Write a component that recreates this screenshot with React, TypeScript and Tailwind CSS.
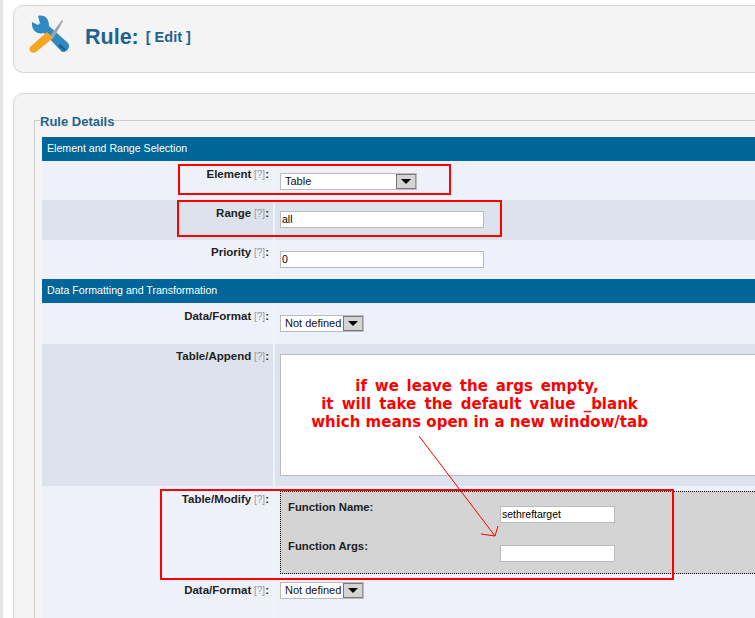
import React from "react";

const Help = () => <span className="text-[10px] font-normal text-[#999]"> [?]</span>;

const Label = ({ name, tall }: { name: string; tall?: boolean }) => (
  <div className={`w-[231px] shrink-0 pr-[4px] text-right text-[11.5px] font-bold text-[#222] ${tall ? "pt-[4px]" : "pt-[5px]"}`}>
    {name}
    <Help />:
  </div>
);

const Row = ({ name, alt, tall, h, children }: { name: string; alt?: boolean; tall?: boolean; h: string; children: React.ReactNode }) => (
  <div className={`flex ${h} ${alt ? "bg-[#dde3ed]" : "bg-[#eef1f9]"}`}>
    <Label name={name} tall={tall} />
    <div className={`w-[2px] shrink-0 ${alt ? "bg-[#eef1f9]" : "bg-[#f1f4fa]"}`} />
    <div className="min-w-0 flex-1 pl-[5px]">{children}</div>
  </div>
);

const SectionHead = ({ title }: { title: string }) => (
  <div className="flex h-6 items-center bg-[#006699] pl-[5px] text-[10.6px] text-white">{title}</div>
);

const Input = ({ value, w }: { value?: string; w: string }) => (
  <div className={`flex h-[17px] items-center border border-[#bbb] bg-white pl-px text-[10.5px] font-normal text-black ${w}`}>
    {value}
  </div>
);

const Select = ({ value, w }: { value: string; w: string }) => (
  <div className={`flex h-[17px] items-center justify-between border border-[#bbb] bg-white pl-[4px] text-[11px] text-[#111] ${w}`}>
    <span>{value}</span>
    <span className="flex h-[15px] w-[20px] items-center justify-center border border-[#777] border-r-[#999] bg-[#d4d4d4]">
      <svg width="10" height="5" viewBox="0 0 10 5">
        <path d="M0 0h10L5 5z" fill="#000" />
      </svg>
    </span>
  </div>
);

const Mark = ({ cls }: { cls: string }) => <div className={`absolute border-[2px] border-[#ff0000] ${cls}`} />;

const Tools = () => (
  <svg width="44" height="40" viewBox="0 0 44 40">
    <path
      d="M10 1 C15 -0.5 21 2 21 11 L40 28 C43 32 39 38 34 37 L16 18 C9 20 3 15 4 7 L10 10 L12 8z"
      fill="#2f8ac2"
    />
    <path d="M31 30 L37 35" stroke="#15608d" strokeWidth="2.5" />
    <path d="M22 21 L34 5 L35 6 L25 24z" fill="#98a4ab" />
    <path d="M19 17 L25 23 L8 37 C4 39 0 36 2 32z" fill="#f6a623" />
  </svg>
);

export default function App() {
  return (
    <div className="relative h-[618px] w-[755px] overflow-hidden bg-white font-['Liberation_Sans',Arial,sans-serif]">
      <div className="h-full w-[1000px] border-l-[3px] border-[#e4e4e4] pl-[10px] pt-[5px]">
        <div className="flex h-[68px] items-start rounded-[10px] border border-[#d6d6d6] bg-[#f4f4f4] pl-[14px] pt-[9px]">
          <Tools />
          <h1 className="ml-[13px] mt-[8px] text-[21.5px] leading-[28px] font-bold text-[#1f6390]">Rule:</h1>
          <span className="ml-[7px] mt-[12px] text-[14.5px] leading-[20px] font-bold text-[#1f6390]">[ Edit ]</span>
        </div>

        <div className="mt-[20px] h-[600px] rounded-[10px] border border-[#d6d6d6] bg-[#f4f4f4] pl-[20px] pt-[26px]">
          <div className="relative border-l border-t border-[#ccc] pl-[7px] pt-[16px]">
            <span className="absolute -top-[7px] left-[5px] bg-[#f4f4f4] text-[13px] leading-[16px] font-bold text-[#1f6390]">
              Rule Details
            </span>
            <SectionHead title="Element and Range Selection" />
            <Row name="Element" h="h-[39px]">
              <Select value="Table" w="w-[137px] mt-[12px]" />
            </Row>
            <Row name="Range" alt h="h-10">
              <Input value="all" w="w-[204px] mt-[11px]" />
            </Row>
            <Row name="Priority" tall h="h-[39px]">
              <Input value="0" w="w-[204px] mt-[11px]" />
            </Row>
            <SectionHead title="Data Formatting and Transformation" />
            <Row name="Data/Format" h="h-[41px]">
              <Select value="Not defined" w="w-[84px] mt-[12px]" />
            </Row>
            <Row name="Table/Append" alt tall h="h-[142px]">
              <div className="mt-[10px] h-[122px] border border-[#bbb] bg-white" />
            </Row>
            <Row name="Table/Modify" h="h-[91px]">
              <div className="mt-[5px] h-[83px] border border-dotted border-black bg-[#d4d4d4] pl-[7px] text-[11.3px] font-bold text-[#222]">
                <div className="flex h-[39px] items-start pt-[7px]">
                  <span className="w-[212px]">Function Name:</span>
                  <Input value="sethreftarget" w="w-[115px] mt-[7px]" />
                </div>
                <div className="flex items-start pt-[7px]">
                  <span className="w-[212px]">Function Args:</span>
                  <Input w="w-[115px] mt-[7px]" />
                </div>
              </div>
            </Row>
            <Row name="Data/Format" h="h-[60px]">
              <Select value="Not defined" w="w-[84px] mt-[5px]" />
            </Row>
          </div>
        </div>
      </div>

      {/* annotations drawn over the screenshot */}
      <Mark cls="left-[178px] top-[164px] h-[31px] w-[273px]" />
      <Mark cls="left-[177px] top-[200px] h-[37px] w-[325px]" />
      <Mark cls="left-[160px] top-[489px] h-[91px] w-[514px]" />
      <div className="absolute left-[290px] top-[377px] w-[380px] text-center font-['DejaVu_Sans',sans-serif] text-[15px] leading-[18px] font-bold text-[#ff0000]">
        <div className="-ml-[6px] [word-spacing:2.6px]">if we leave the args empty,</div>
        <div className="-ml-[1px] [word-spacing:3px]">it will take the default value _blank</div>
        <div className="-ml-[1px]">which means open in a new window/tab</div>
      </div>
      <svg className="absolute left-[410px] top-[430px]" width="100" height="115" viewBox="0 0 100 115">
        <path d="M9 6 L85 106 M88 96 L85 106 L71 104" fill="none" stroke="#ff0000" strokeWidth="1" />
      </svg>
    </div>
  );
}
